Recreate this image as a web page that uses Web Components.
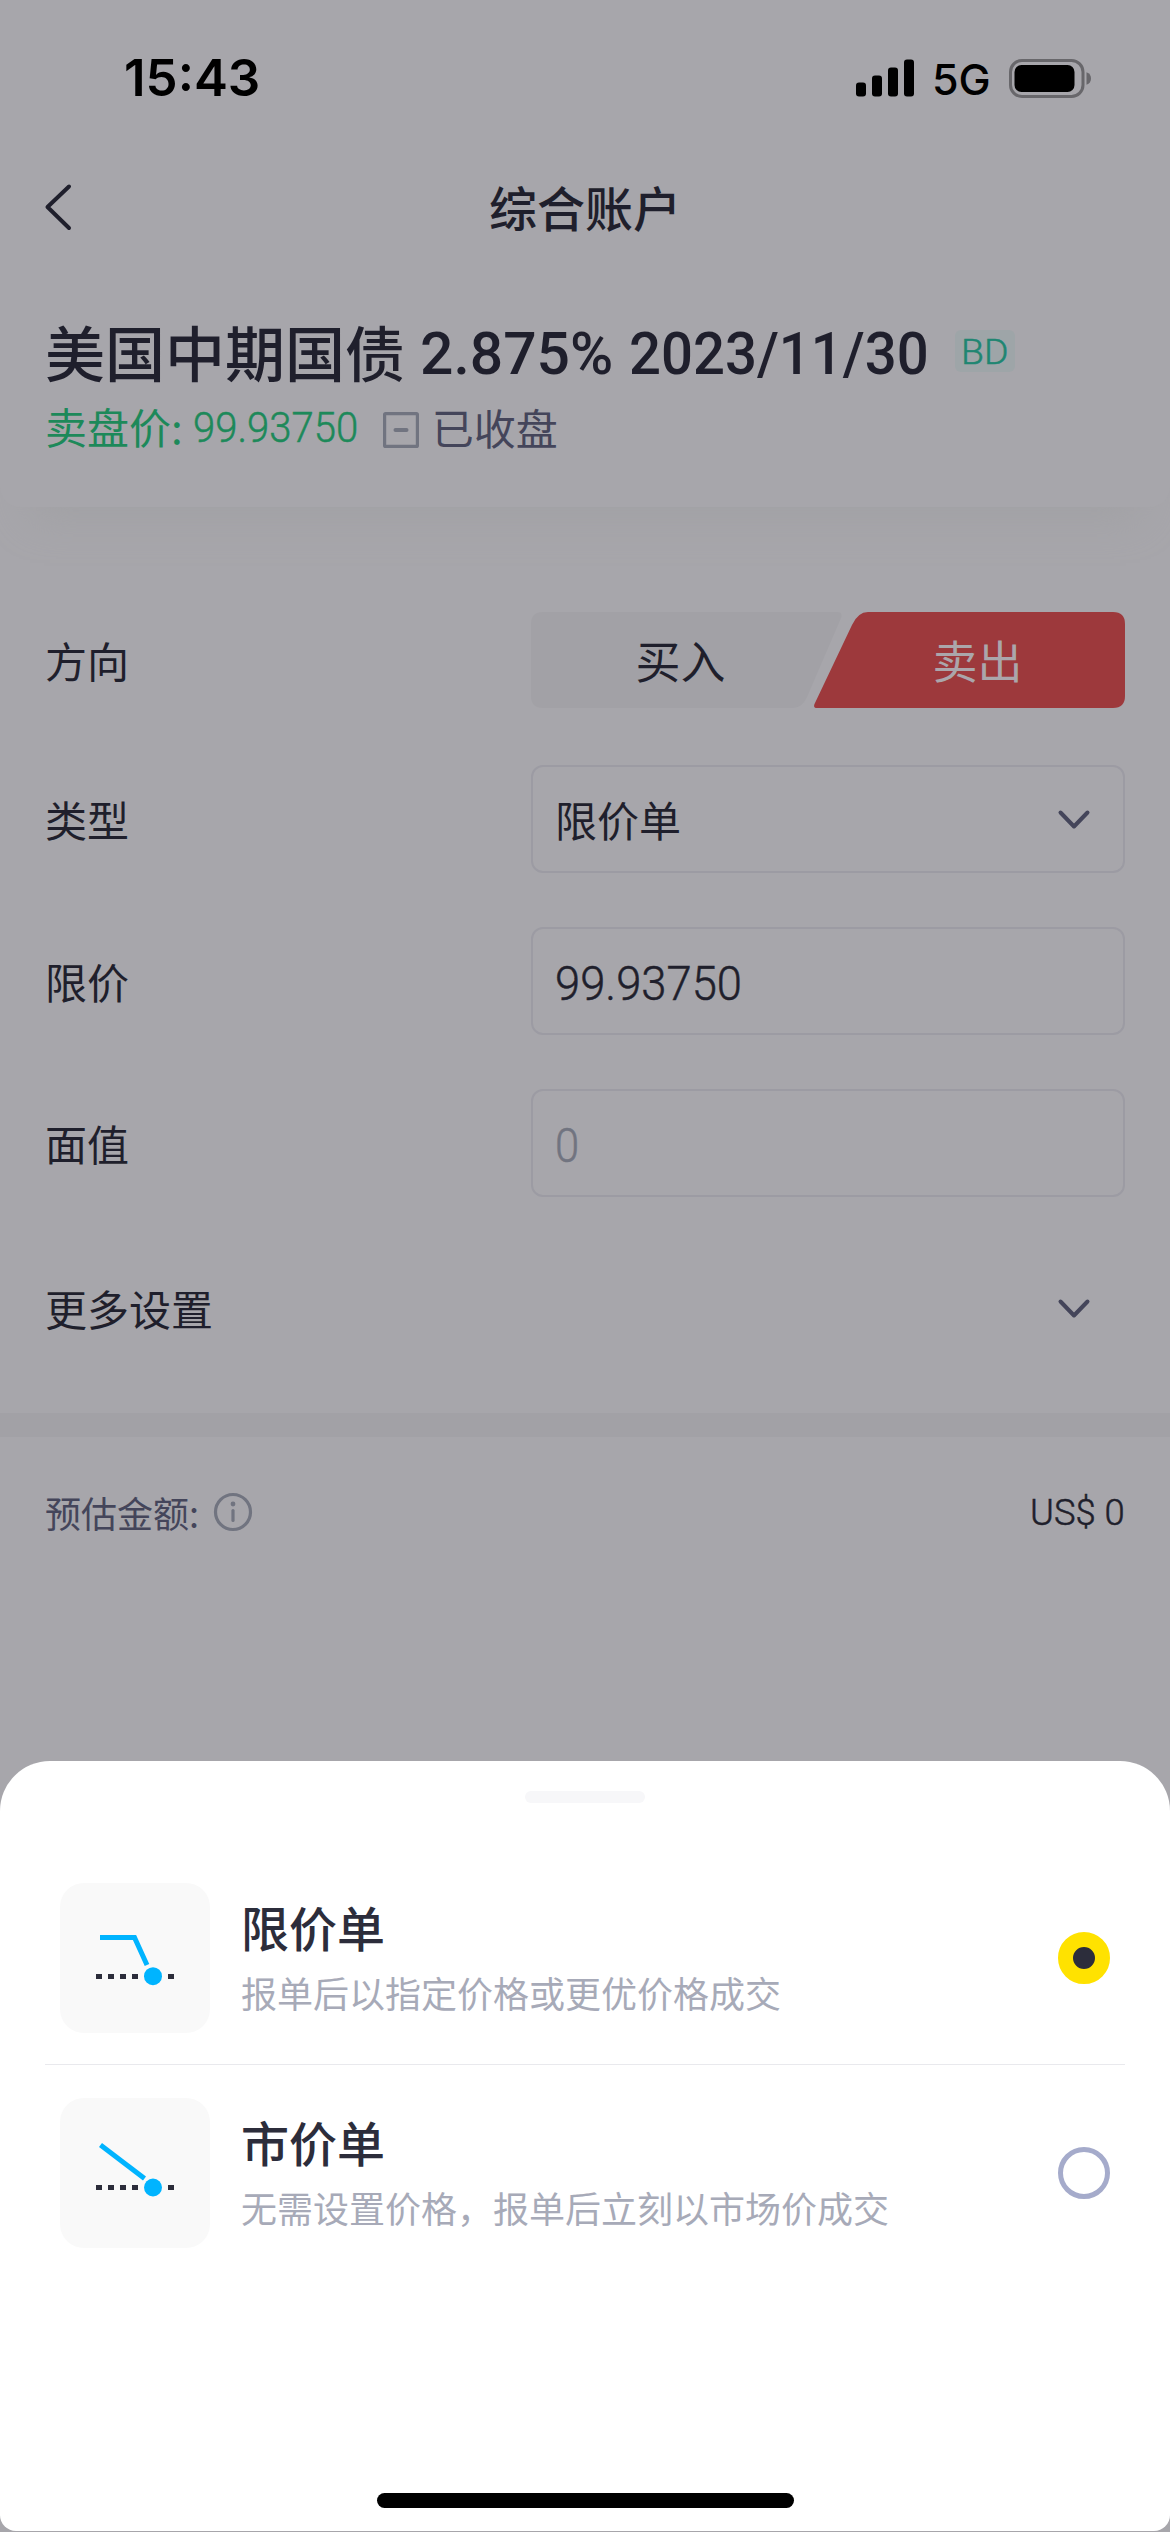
<!DOCTYPE html>
<html lang="zh-CN">
<head>
<meta charset="utf-8">
<title>综合账户</title>
<style>
  html, body { margin: 0; padding: 0; }
  body { width: 1170px; height: 2532px; overflow: hidden; background: #a7a6ab; }
</style>
</head>
<body>
<trade-app></trade-app>

<script>
const define = (name, html, setup) => {
  const template = document.createElement('template');
  template.innerHTML = html;
  customElements.define(name, class extends HTMLElement {
    connectedCallback() {
      if (this.shadowRoot) return;
      this.attachShadow({ mode: 'open' }).appendChild(template.content.cloneNode(true));
      if (setup) setup(this, this.shadowRoot);
    }
  });
};

/* Condensed run of digits: squeezes its slot to the given advance width. */
define('fit-text', `
  <style>
    :host { display: flex; font-family: Roboto, "Noto Sans", sans-serif; line-height: 1.2; white-space: nowrap; flex: none; }
    :host([book]) { font-weight: 300; -webkit-text-stroke: 0.5px currentColor; }
    span { display: block; flex: none; transform-origin: 0 50%; }
  </style>
  <span><slot></slot></span>`, (host, root) => {
    const target = parseFloat(host.getAttribute('width'));
    const span = root.querySelector('span');
    const fit = () => {
      span.style.transform = 'none';
      const natural = span.offsetWidth;
      if (natural) span.style.transform = 'scaleX(' + target / natural + ')';
    };
    host.style.width = target + 'px';
    fit();
    addEventListener('load', fit);
  });

define('status-bar', `
  <style>
    :host { display: flex; align-items: center; justify-content: space-between; height: 156px; padding: 0 79px 0 124px; box-sizing: border-box; color: #000; }
    .time { font: 600 51px/1.2 Inter, sans-serif; }
    .right { display: flex; align-items: center; }
    .net { font: 500 43px/1.2 Inter, sans-serif; margin: 3px 18px 0 18px; }
    svg { display: block; }
  </style>
  <fit-text class="time" width="136">15:43</fit-text>
  <div class="right">
    <svg width="58" height="38" viewBox="0 0 58 38"><rect y="23.500" width="10" height="14" rx="3"/><rect x="16" y="16.500" width="10" height="21" rx="3"/><rect x="32" y="8.500" width="10" height="29" rx="3"/><rect x="48" y="0.500" width="10" height="37" rx="3"/></svg>
    <fit-text class="net" width="59">5G</fit-text>
    <svg width="82" height="39" viewBox="0 0 82 39"><rect x="1.500" y="1.500" width="72.500" height="36" rx="11.500" fill="none" stroke="#68676b" stroke-width="3"/><rect x="5.500" y="6" width="60" height="27" rx="7"/><path d="M77.500 13.200c3 .9 4.500 3.300 4.500 6.300s-1.500 5.400-4.500 6.300z" fill="#68676b"/></svg>
  </div>`);

define('nav-bar', `
  <style>
    :host { display: grid; grid-template-columns: 1fr auto 1fr; align-items: center; height: 102px; padding: 0 43px; color: #1f1f2c; }
    h1 { margin: 0 0 3px; font-size: 48px; line-height: 72px; font-weight: 500; }
    svg { display: block; }
  </style>
  <svg width="30" height="48" viewBox="0 0 30 48"><path d="M26 3.500 4.500 24 26 45" fill="none" stroke="currentColor" stroke-width="4" stroke-linecap="round" stroke-linejoin="round"/></svg>
  <h1><slot></slot></h1>`);

define('bond-header', `
  <style>
    :host { display: block; height: 249px; padding: 60px 45px 0; box-sizing: border-box; border-radius: 0 0 20px 20px; box-shadow: 0 40px 40px -30px #a1a1a4; background: #a7a6ab; }
    .title { display: flex; align-items: center; height: 66px; color: #1f1f2c; font-size: 60px; font-weight: 500; line-height: 66px; }
    .title fit-text { margin-top: 6px; }
    .badge { display: flex; align-items: center; justify-content: center; width: 60px; height: 42px; margin-left: 26px; border-radius: 6px; background: #9ea5a8; color: #1f8672; }
    .badge fit-text { font-size: 35px; margin: 4px 2px 0 0; }
    .sub { display: flex; align-items: center; height: 84px; font-size: 42px; color: #44455a; }
    .ask { color: #1d895a; line-height: 60px; }
    .sub fit-text { color: #1d895a; margin: 5px 0 0 10px; }
    svg { display: block; margin: 8px 13px 0 25px; }
  </style>
  <div class="title"><span>美国中期国债</span><fit-text width="193" style="margin-left:15px">2.875%</fit-text><fit-text width="300" style="margin-left:16px">2023/11/30</fit-text>
    <div class="badge"><fit-text book width="47">BD</fit-text></div></div>
  <div class="sub"><span class="ask">卖盘价:</span><fit-text book width="165">99.93750</fit-text>
    <svg width="36" height="36" viewBox="0 0 36 36"><rect x="1.600" y="1.600" width="32.800" height="32.800" rx="1" fill="none" stroke="#717480" stroke-width="3.200"/><path d="M12.500 18h11" stroke="#717480" stroke-width="4" stroke-linecap="round"/></svg>
    <span>已收盘</span></div>`);

define('form-row', `
  <style>
    :host { display: flex; align-items: center; justify-content: space-between; height: 108px; padding: 0 45px; font-size: 42px; line-height: 60px; color: #1f1f2c; }
    :host([short]) { height: 96px; }
  </style>
  <span class="label"></span><slot></slot>`, (host, root) => {
    root.querySelector('.label').textContent = host.getAttribute('label');
  });

define('icon-chevron', `
  <style>:host { display: block; flex: none; } svg { display: block; margin-top: 2px; }</style>
  <svg width="34" height="22" viewBox="0 0 34 22"><path d="M3.500 3.500 17 17.500 30.500 3.500" fill="none" stroke="#44455a" stroke-width="4" stroke-linecap="round" stroke-linejoin="round"/></svg>`);

define('field-box', `
  <style>
    :host { display: flex; align-items: center; justify-content: space-between; width: 594px; height: 108px; padding: 0 32px 0 22px; box-sizing: border-box; border: 2px solid #9c9ba3; border-radius: 12px; }
    ::slotted(fit-text) { font-size: 49px; margin-top: 6px; }
  </style>
  <slot></slot>`);

define('side-switch', `
  <style>
    :host { display: grid; width: 594px; height: 96px; font-size: 45px; line-height: 60px; }
    svg, div { grid-area: 1 / 1; }
    svg { display: block; }
    div { display: grid; grid-template-columns: 299px 295px; align-items: center; text-align: center; z-index: 1; }
    .sell { color: #aba6ab; }
  </style>
  <svg width="594" height="96" viewBox="0 0 594 96">
    <path d="M12 0H306q6 0 4 6L276 85q-5 11-14 11H12Q0 96 0 84V12Q0 0 12 0z" fill="#a2a1a6"/>
    <path d="M344 0H582Q594 0 594 12V84Q594 96 582 96H286Q282 96 283.500 92L321 13Q327 0 337 0z" fill="#9d393c"/>
  </svg>
  <div><span class="buy">买入</span><span class="sell">卖出</span></div>`);

define('amount-row', `
  <style>
    :host { display: flex; align-items: center; height: 150px; padding: 0 45px; font-size: 36px; line-height: 54px; color: #44455a; }
    svg { display: block; margin-left: 14px; }
    fit-text { margin-left: auto; color: #1f1f2c; margin-top: 4px; }
  </style>
  <span>预估金额:</span>
  <svg width="40" height="40" viewBox="0 0 40 40"><circle cx="20" cy="20" r="17.500" fill="none" stroke="#717480" stroke-width="3.200"/><circle cx="20" cy="12" r="2.400" fill="#717480"/><path d="M20 18.500v10" stroke="#717480" stroke-width="3.200" stroke-linecap="round"/></svg>
  <fit-text book width="95">US$ 0</fit-text>`);

define('order-option', `
  <style>
    :host { display: flex; align-items: center; height: 212px; margin: 0 45px; padding: 0 15px; box-sizing: border-box; }
    :host([last]) { height: 217px; border-top: 1px solid #e9e9ed; }
    .icon { width: 150px; height: 150px; border-radius: 24px; background: #f9f9f9; flex: none; }
    .icon svg { display: block; }
    .text { flex: 1; margin: 1px 0 0 31px; }
    .name { font-size: 48px; line-height: 66px; font-weight: 500; color: #2c2d3b; }
    .desc { font-size: 36px; line-height: 66px; color: #a7aab8; }
    .radio { width: 52px; height: 52px; box-sizing: border-box; border-radius: 50%; border: 5px solid #a5abcb; }
    :host([checked]) .radio { border: 15px solid #ffe200; background: #2c2d3b; }
    .market { display: none; }
    :host([last]) .market { display: inline; }
    :host([last]) .limit { display: none; }
  </style>
  <div class="icon"><svg width="150" height="150" viewBox="0 0 150 150" fill="none">
    <g class="limit"><path d="M40 54.500H74.500L87 82" stroke="#00b4ff" stroke-width="5"/><path d="M36 93.500h42M108 93.500h6" stroke="#2c2d3b" stroke-width="4.800" stroke-dasharray="6 6"/><circle cx="93" cy="93.200" r="9" fill="#00b4ff"/></g>
    <g class="market"><path d="M40.500 47 84.500 80.500" stroke="#00b4ff" stroke-width="5"/><path d="M36 89.500h42M108 89.500h6" stroke="#2c2d3b" stroke-width="4.800" stroke-dasharray="6 6"/><circle cx="93" cy="89.500" r="9" fill="#00b4ff"/></g>
  </svg></div>
  <div class="text"><div class="name"><slot name="name"></slot></div><div class="desc"><slot name="desc"></slot></div></div>
  <div class="radio"></div>`);

define('bottom-sheet', `
  <style>
    :host { display: flex; flex-direction: column; height: 770px; box-sizing: border-box; padding: 30px 0 23px; border-radius: 50px 50px 16px 16px; background: #fff; flex: none; }
    .grip { width: 120px; height: 12px; margin: 0 auto 49px; border-radius: 6px; background: #f7f7f9; flex: none; }
    .home { width: 417px; height: 15px; margin: auto auto 0; border-radius: 8px; background: #000; flex: none; }
  </style>
  <div class="grip"></div>
  <slot></slot>
  <div class="home"></div>`);

define('trade-app', `
  <style>
    :host { display: flex; flex-direction: column; width: 1170px; height: 2532px; background: #a7a6ab; font-family: "Noto Sans CJK SC", sans-serif; white-space: nowrap; }
    .form { display: flex; flex-direction: column; gap: 54px; padding: 105px 0 51px; }
    .form form-row[short] { margin-bottom: 3px; }
    .form form-row:last-child { margin-top: 3px; }
    .band { height: 24px; background: #a2a1a6; }
    bottom-sheet { margin: auto 0 1px; }
    .more { margin-right: 34px; }
    .hint { color: #717480; }
  </style>
  <status-bar></status-bar>
  <nav-bar>综合账户</nav-bar>
  <bond-header></bond-header>
  <div class="form">
    <form-row label="方向" short><side-switch></side-switch></form-row>
    <form-row label="类型"><field-box><span>限价单</span><icon-chevron></icon-chevron></field-box></form-row>
    <form-row label="限价"><field-box><fit-text book width="187">99.93750</fit-text></field-box></form-row>
    <form-row label="面值"><field-box><fit-text book width="24" class="hint">0</fit-text></field-box></form-row>
    <form-row label="更多设置"><icon-chevron class="more"></icon-chevron></form-row>
  </div>
  <div class="band"></div>
  <amount-row></amount-row>
  <bottom-sheet>
    <order-option checked><span slot="name">限价单</span><span slot="desc">报单后以指定价格或更优价格成交</span></order-option>
    <order-option last><span slot="name">市价单</span><span slot="desc">无需设置价格，报单后立刻以市场价成交</span></order-option>
  </bottom-sheet>`);
</script>
</body>
</html>
